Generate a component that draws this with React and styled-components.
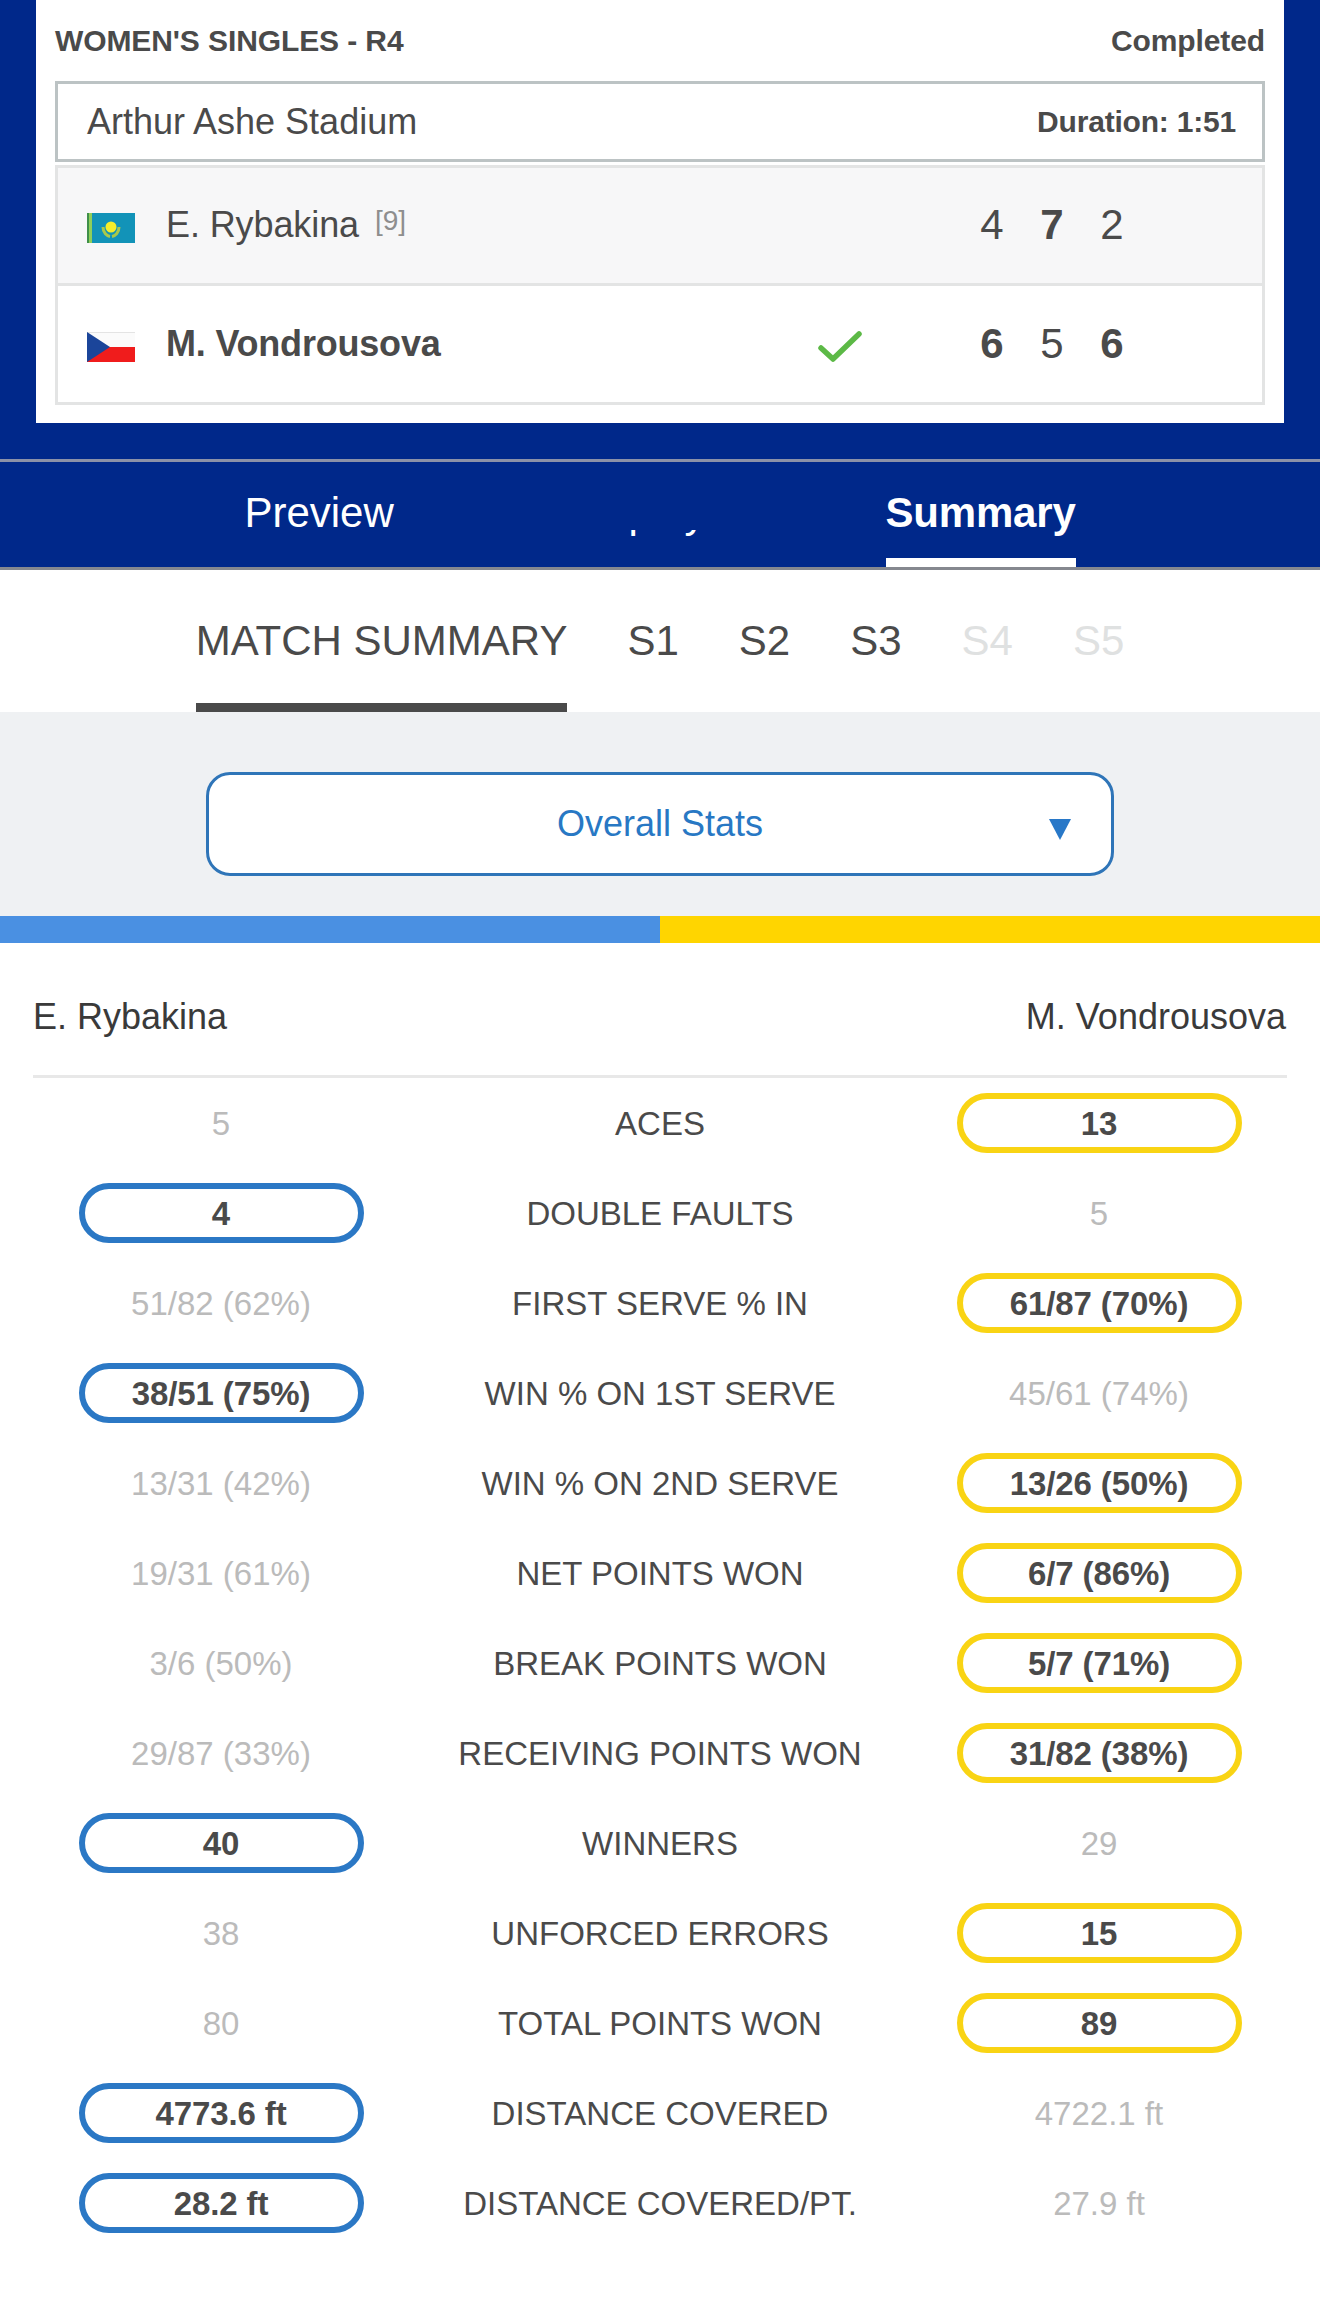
import React from "react";
import styled, { createGlobalStyle } from "styled-components";

const Global = createGlobalStyle`
  html, body { margin: 0; padding: 0; background: #fff; }
  * { box-sizing: border-box; }
  body { font-family: "Liberation Sans", Arial, sans-serif; color: #4a4a4a; }
`;

const Page = styled.div`
  width: 1320px;
  min-height: 2304px;
  background: #fff;
`;

const Hero = styled.section`
  background: #00288a;
  padding: 0 36px 36px;
`;

const Card = styled.div`
  background: #fff;
  padding: 0 19px 18px;
`;

const MatchHead = styled.div`
  height: 81px;
  display: flex;
  justify-content: space-between;
  align-items: center;
  font-size: 30px;
  font-weight: 700;
  letter-spacing: -0.1px;
  color: #4a4a4a;
`;

const Venue = styled.div`
  height: 81px;
  border: 3px solid #bcc3c4;
  padding: 0 26px 0 29px;
  display: flex;
  justify-content: space-between;
  align-items: center;
`;

const VenueName = styled.span`
  font-size: 36px;
`;

const Duration = styled.span`
  font-size: 30px;
  font-weight: 700;
  letter-spacing: -0.2px;
`;

const Players = styled.div`
  margin-top: 3px;
  border: 3px solid #e3e4e4;
`;

const PlayerRow = styled.div`
  height: ${(p) => (p.$first ? "115px" : "116px")};
  display: flex;
  align-items: center;
  padding: 0 120px 0 29px;
  background: ${(p) => (p.$first ? "#f7f7f8" : "#fff")};
`;

const Divider = styled.div`
  height: 3px;
  background: #e3e4e4;
`;

const Flag = styled.svg`
  width: 48px;
  height: 30px;
  flex: none;
  margin: 5px 31px 0 0;
`;

const PlayerName = styled.div`
  flex: 1;
  display: flex;
  align-items: flex-start;
  font-size: 36px;
  letter-spacing: ${(p) => (p.$winner ? "-0.2px" : "-0.1px")};
  font-weight: ${(p) => (p.$winner ? 700 : 400)};
  margin-top: ${(p) => (p.$winner ? "0" : "-1px")};
`;

const Seed = styled.span`
  font-size: 28px;
  color: #8e8e8e;
  margin-left: 16px;
  margin-top: 1px;
`;

const Check = styled.svg`
  width: 44px;
  height: 32px;
  flex: none;
  margin: 6px 100px 0 0;
`;

const Scores = styled.div`
  display: grid;
  grid-template-columns: repeat(3, 60px);
  text-align: center;
  font-size: 42px;
  margin-top: -1px;
`;

const Score = styled.span`
  font-weight: ${(p) => (p.$won ? 700 : 400)};
`;

const MainTabs = styled.nav`
  height: 111px;
  background: #00288a;
  border-top: 3px solid #8b91a8;
  border-bottom: 3px solid #85888f;
  display: flex;
  justify-content: center;
  gap: 177px;
`;

const MainTab = styled.a`
  display: block;
  font-size: 42px;
  line-height: 102px;
  height: 105px;
  color: #fff;
  font-weight: ${(p) => (p.$active ? 700 : 400)};
  letter-spacing: ${(p) => (p.$active ? "-0.2px" : "0")};
  border-bottom: 9px solid ${(p) => (p.$active ? "#fff" : "transparent")};
`;

const MaskedTab = styled(MainTab)`
  clip-path: inset(68px 0 0 0);
  margin: 0 3px 0 -3px;
`;

const SetTabs = styled.div`
  height: 142px;
  background: #fff;
  display: flex;
  justify-content: center;
  gap: 60px;
`;

const SetTab = styled.a`
  display: block;
  height: 142px;
  font-size: 42px;
  line-height: 142px;
  color: ${(p) => (p.$disabled ? "#dfe1e1" : "#4a4a4a")};
  border-bottom: 9px solid ${(p) => (p.$active ? "#4a4a4a" : "transparent")};
`;

const SelectBand = styled.div`
  height: 204px;
  background: #eff1f3;
  padding-top: 60px;
  display: flex;
  justify-content: center;
  align-items: flex-start;
`;

const Select = styled.div`
  position: relative;
  width: 908px;
  height: 104px;
  background: #fff;
  border: 3px solid #2f75b8;
  border-radius: 24px;
  display: flex;
  align-items: center;
  justify-content: center;
  font-size: 36px;
  color: #2878c4;
`;

const Arrow = styled.span`
  position: absolute;
  right: 40px;
  top: 44px;
  width: 0;
  height: 0;
  border-left: 11px solid transparent;
  border-right: 11px solid transparent;
  border-top: 21px solid #2878c8;
`;

const ColorBar = styled.div`
  height: 27px;
  display: grid;
  grid-template-columns: 1fr 1fr;
`;

const ColorHalf = styled.div`
  background: ${(p) => p.$color};
`;

const Stats = styled.section`
  padding: 0 33px;
`;

const StatsHead = styled.div`
  height: 135px;
  display: flex;
  justify-content: space-between;
  align-items: center;
  font-size: 36px;
  color: #3a3a3a;
  border-bottom: 3px solid #e8e8e8;
  padding: 16px 1px 0 0;
`;

const StatRow = styled.div`
  height: 90px;
  display: grid;
  grid-template-columns: 1fr 502px 1fr;
  align-items: center;
  justify-items: center;
  font-size: 33px;
`;

const StatLabel = styled.div`
  color: #4a4a4a;
  white-space: nowrap;
  padding-top: 2px;
`;

const StatValue = styled.div`
  color: #bbbbbb;
  padding-top: 2px;
`;

const Pill = styled.div`
  width: 285px;
  height: 60px;
  border: 6px solid ${(p) => p.$color};
  border-radius: 30px;
  padding-top: 1px;
  display: flex;
  align-items: center;
  justify-content: center;
  font-weight: 700;
  letter-spacing: -0.1px;
  color: #4a4a4a;
`;

const BLUE = "#2b78c5";
const YELLOW = "#f9d414";

const rows = [
  ["5", "ACES", "13", 1],
  ["4", "DOUBLE FAULTS", "5", 0],
  ["51/82 (62%)", "FIRST SERVE % IN", "61/87 (70%)", 1],
  ["38/51 (75%)", "WIN % ON 1ST SERVE", "45/61 (74%)", 0],
  ["13/31 (42%)", "WIN % ON 2ND SERVE", "13/26 (50%)", 1],
  ["19/31 (61%)", "NET POINTS WON", "6/7 (86%)", 1],
  ["3/6 (50%)", "BREAK POINTS WON", "5/7 (71%)", 1],
  ["29/87 (33%)", "RECEIVING POINTS WON", "31/82 (38%)", 1],
  ["40", "WINNERS", "29", 0],
  ["38", "UNFORCED ERRORS", "15", 1],
  ["80", "TOTAL POINTS WON", "89", 1],
  ["4773.6 ft", "DISTANCE COVERED", "4722.1 ft", 0],
  ["28.2 ft", "DISTANCE COVERED/PT.", "27.9 ft", 0],
];

const KazFlag = () => (
  <Flag viewBox="0 0 48 30">
    <rect width="48" height="30" fill="#1293b8" />
    <rect width="2" height="30" fill="#3f8f4a" />
    <rect x="2" width="3" height="30" fill="#8fcf5a" />
    <circle cx="24" cy="14" r="5.5" fill="#f4ee2a" />
    <path d="M16 14c0 6 4 9 7 9.500M32 14c0 6-4 9-7 9.500" stroke="#a9c94a" strokeWidth="3" fill="none" />
  </Flag>
);

const CzechFlag = () => (
  <Flag viewBox="0 0 48 30">
    <rect width="48" height="15" fill="#fbfbfb" />
    <rect y="0" width="48" height="1" fill="#e4e4e4" />
    <rect y="15" width="48" height="15" fill="#f01c1c" />
    <path d="M0 0L23 15L0 30Z" fill="#1b459a" />
  </Flag>
);

export default function App() {
  return (
    <Page>
      <Global />
      <Hero>
        <Card>
          <MatchHead>
            <span>WOMEN'S SINGLES - R4</span>
            <span>Completed</span>
          </MatchHead>
          <Venue>
            <VenueName>Arthur Ashe Stadium</VenueName>
            <Duration>Duration: 1:51</Duration>
          </Venue>
          <Players>
            <PlayerRow $first>
              <KazFlag />
              <PlayerName>
                E. Rybakina<Seed>[9]</Seed>
              </PlayerName>
              <Scores>
                <Score>4</Score>
                <Score $won>7</Score>
                <Score>2</Score>
              </Scores>
            </PlayerRow>
            <Divider />
            <PlayerRow>
              <CzechFlag />
              <PlayerName $winner>M. Vondrousova</PlayerName>
              <Check viewBox="0 0 44 32">
                <path d="M3 17L15 28L41 3" fill="none" stroke="#5cb946" strokeWidth="5.500" strokeLinecap="round" strokeLinejoin="round" />
              </Check>
              <Scores>
                <Score $won>6</Score>
                <Score>5</Score>
                <Score $won>6</Score>
              </Scores>
            </PlayerRow>
          </Players>
        </Card>
      </Hero>
      <MainTabs>
        <MainTab>Preview</MainTab>
        <MaskedTab>Display</MaskedTab>
        <MainTab $active>Summary</MainTab>
      </MainTabs>
      <SetTabs>
        <SetTab $active>MATCH SUMMARY</SetTab>
        <SetTab>S1</SetTab>
        <SetTab>S2</SetTab>
        <SetTab>S3</SetTab>
        <SetTab $disabled>S4</SetTab>
        <SetTab $disabled>S5</SetTab>
      </SetTabs>
      <SelectBand>
        <Select>
          Overall Stats
          <Arrow />
        </Select>
      </SelectBand>
      <ColorBar>
        <ColorHalf $color="#4a90e2" />
        <ColorHalf $color="#ffd500" />
      </ColorBar>
      <Stats>
        <StatsHead>
          <span>E. Rybakina</span>
          <span>M. Vondrousova</span>
        </StatsHead>
        {rows.map(([left, label, right, winner]) => (
          <StatRow key={label}>
            {winner === 0 ? <Pill $color={BLUE}>{left}</Pill> : <StatValue>{left}</StatValue>}
            <StatLabel>{label}</StatLabel>
            {winner === 1 ? <Pill $color={YELLOW}>{right}</Pill> : <StatValue>{right}</StatValue>}
          </StatRow>
        ))}
      </Stats>
    </Page>
  );
}
